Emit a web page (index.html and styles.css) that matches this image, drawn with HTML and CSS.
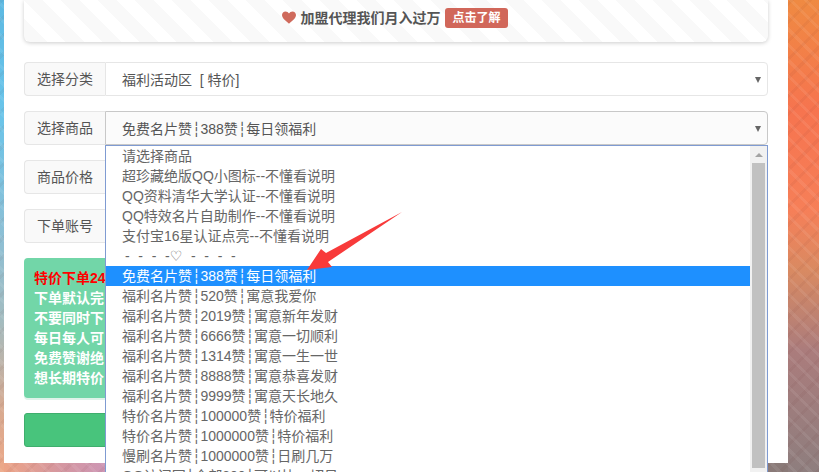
FILE: index.html
```html
<!DOCTYPE html>
<html lang="zh-CN">
<head>
<meta charset="utf-8">
<title>选择商品</title>
<link rel="stylesheet" href="styles.css">
</head>
<body>
<main class="panel">
  <section class="promo">
    <svg class="heart" viewBox="0 0 16 14" aria-hidden="true"><path d="M8 14C5 11.4 0 8.2 0 4.2 0 1.8 1.8 0 4 0c1.700 0 3.100.9 4 2.400C8.900.9 10.300 0 12 0c2.200 0 4 1.800 4 4.200C16 8.200 11 11.400 8 14z"/></svg>
    <span class="promo-text">加盟代理我们月入过万</span>
    <span class="badge">点击了解</span>
  </section>

  <div class="row">
    <label class="row-label">选择分类</label>
    <div class="select">福利活动区&nbsp; [ 特价]<i class="caret"></i></div>
  </div>

  <div class="row">
    <label class="row-label">选择商品</label>
    <div class="select select-open">免费名片赞┆388赞┆每日领福利<i class="caret"></i></div>
    <div class="dropdown">
      <ul class="options">
        <li>请选择商品</li>
        <li>超珍藏绝版QQ小图标--不懂看说明</li>
        <li>QQ资料清华大学认证--不懂看说明</li>
        <li>QQ特效名片自助制作--不懂看说明</li>
        <li>支付宝16星认证点亮--不懂看说明</li>
        <li class="divider">- - - -♡ - - - -</li>
        <li class="active">免费名片赞┆388赞┆每日领福利</li>
        <li>福利名片赞┆520赞┆寓意我爱你</li>
        <li>福利名片赞┆2019赞┆寓意新年发财</li>
        <li>福利名片赞┆6666赞┆寓意一切顺利</li>
        <li>福利名片赞┆1314赞┆寓意一生一世</li>
        <li>福利名片赞┆8888赞┆寓意恭喜发财</li>
        <li>福利名片赞┆9999赞┆寓意天长地久</li>
        <li>特价名片赞┆100000赞┆特价福利</li>
        <li>特价名片赞┆1000000赞┆特价福利</li>
        <li>慢刷名片赞┆1000000赞┆日刷几万</li>
        <li>QQ访问网┆全部300┆可以比一切日</li>
      </ul>
      <div class="scrollbar">
        <i class="scroll-up"></i>
        <div class="thumb"></div>
      </div>
    </div>
  </div>

  <div class="row">
    <label class="row-label">商品价格</label>
    <div class="select"></div>
  </div>

  <div class="row">
    <label class="row-label">下单账号</label>
    <div class="select"></div>
  </div>

  <section class="notice">
    <p class="notice-hot">特价下单24</p>
    <p>下单默认完</p>
    <p>不要同时下</p>
    <p>每日每人可</p>
    <p>免费赞谢绝</p>
    <p>想长期特价</p>
  </section>

  <div class="submit"></div>
</main>

<svg class="pointer" viewBox="0 0 819 472" aria-hidden="true"><polygon points="402,212 326,253 321,249 307,270 332,267 328,262"/></svg>
</body>
</html>
```
FILE: styles.css
```css
* { box-sizing: border-box; }
html, body { height: 472px; }
body {
  margin: 0;
  overflow: hidden;
  position: relative;
  padding: 0 31px 9px 4px;
  font: 14px/20px "Liberation Sans", "DejaVu Sans", "Noto Sans CJK SC", sans-serif;
  color: #555;
  background-color: #c88;
  background-image:
    repeating-linear-gradient(45deg, rgba(255,255,255,.07) 0 3px, transparent 3px 11px),
    repeating-linear-gradient(-45deg, rgba(90,30,30,.05) 0 3px, transparent 3px 13px),
    linear-gradient(180deg, #5db9e2 0, #69c4ea 110px, #8ebfd4 240px, #a3bcc0 320px, #d8aa90 410px, #eda888 472px),
    linear-gradient(180deg, #ef8a42 0, #f6744f 110px, #f67f58 210px, #d98a62 270px, #ab7c7c 350px, #8e7e7e 472px),
    linear-gradient(90deg, #eea585 0, #d597a0 60px, #cc96b6 110px, #8a7a78 300px);
  background-size: auto, auto, 4px 100%, 31px 100%, 100% 9px;
  background-position: 0 0, 0 0, left top, right top, left bottom;
  background-repeat: repeat, repeat, no-repeat, no-repeat, no-repeat;
}
.panel {
  height: 463px;
  padding: 0 20px;
  background: #fff;
}
.promo {
  height: 42px;
  margin-bottom: 20px;
  padding: 8px 2px 0 0;
  display: flex;
  justify-content: center;
  align-items: flex-start;
  gap: 5px;
  border-radius: 0 0 6px 6px;
  box-shadow: 0 1px 4px rgba(0,0,0,.2);
  background-color: #fff;
  background-image: linear-gradient(45deg, #f9f9f9 25%, transparent 25%, transparent 50%, #f9f9f9 50%, #f9f9f9 75%, transparent 75%);
  background-size: 37px 37px;
}
.heart { width: 14px; height: 13px; margin-top: 3px; fill: #cf6a5c; margin-right: -1px; }
.promo-text { font-weight: bold; color: #555; line-height: 20px; }
.badge {
  height: 20px;
  padding: 0 7px;
  border-radius: 3px;
  background: #d1675a;
  color: #fff;
  font-size: 12px;
  font-weight: bold;
  line-height: 20px;
}
.row {
  position: relative;
  display: flex;
  height: 34px;
  margin-bottom: 15px;
}
.row-label {
  width: 81px;
  flex: none;
  padding: 6px 0 6px 12px;
  white-space: nowrap;
  background: #f9f9f9;
  border: 1px solid #e6e6e6;
  border-right: 0;
  border-radius: 4px 0 0 4px;
}
.select {
  position: relative;
  flex: 1;
  padding: 7px 16px;
  background: #fff;
  border: 1px solid #e6e6e6;
  border-radius: 0 4px 4px 0;
}
.select-open {
  background: #fbfbfb;
  border-color: #c8c8c8;
}
.caret {
  position: absolute;
  right: 6px;
  top: 14px;
  border-top: 6px solid #666;
  border-left: 3px solid transparent;
  border-right: 3px solid transparent;
}
.dropdown {
  position: absolute;
  z-index: 2;
  top: 34px;
  left: 81px;
  right: 0;
  height: 336px;
  display: flex;
  background: #fff;
  border: 1px solid #7f9bd2;
}
.options {
  flex: 1;
  margin: 0;
  padding: 0;
  list-style: none;
  color: #666;
}
.options li {
  height: 20px;
  padding-left: 16px;
  white-space: nowrap;
  overflow: hidden;
}
.options .active { background: #1e90ff; color: #fff; }
.options .divider { padding-left: 19px; word-spacing: 4.8px; }
.scrollbar {
  position: relative;
  width: 17px;
  flex: none;
  padding: 17px 2px 0;
  background: #f1f1f1;
}
.scroll-up {
  position: absolute;
  top: 7px;
  left: 5px;
  border-bottom: 4px solid #a3a3a3;
  border-left: 4px solid transparent;
  border-right: 4px solid transparent;
}
.thumb { height: 305px; background: #c1c1c1; }
.notice {
  height: 140px;
  margin-bottom: 15px;
  padding: 10px;
  border-radius: 4px;
  background: #72d6a8;
  box-shadow: 0 2px 0 #dff3ea;
  color: #fff;
  font-weight: bold;
}
.notice p { margin: 0; white-space: nowrap; }
.notice .notice-hot { color: #f00; }
.submit {
  height: 34px;
  border: 1px solid #3fae6d;
  border-radius: 3px;
  background: #48c47c;
}
.pointer {
  position: absolute;
  z-index: 3;
  left: 0;
  top: 0;
  width: 819px;
  height: 472px;
  fill: #f83a3a;
  pointer-events: none;
}
```
